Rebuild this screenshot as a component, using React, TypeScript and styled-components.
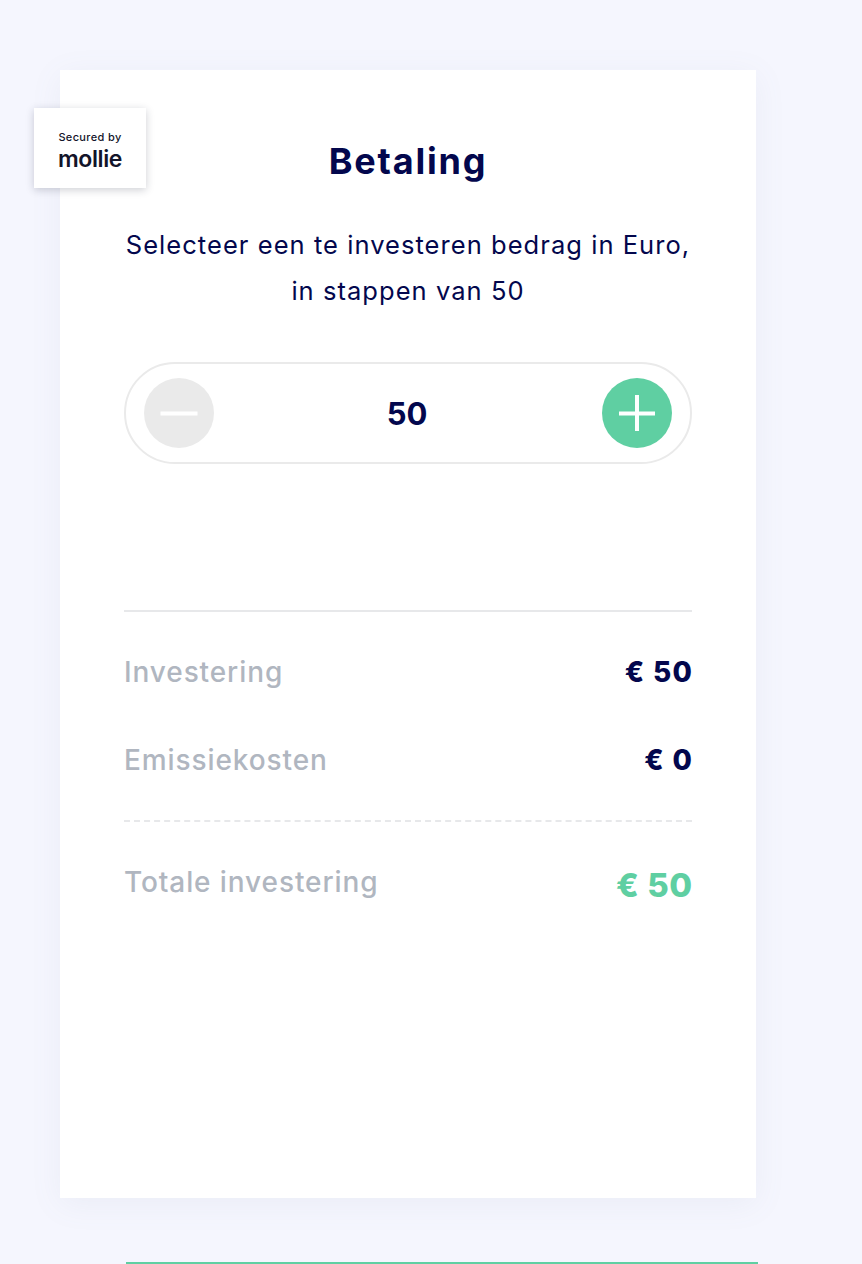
import React from "react";
import styled, { createGlobalStyle } from "styled-components";

const Global = createGlobalStyle`
  html, body { margin: 0; padding: 0; background: #f5f6fe; }
  body { font-family: Inter, "Noto Sans", "Liberation Sans", sans-serif; }
`;

const Page = styled.div`
  width: 862px;
  height: 1264px;
  overflow: hidden;
  background: #f5f6fe;
  padding: 70px 0 0 60px;
  box-sizing: border-box;
`;

const Card = styled.section`
  position: relative;
  width: 696px;
  height: 1128px;
  box-sizing: border-box;
  background: #fff;
  box-shadow: 0 6px 30px rgba(120, 125, 150, 0.08);
  padding: 70px 64px 0;
  display: flex;
  flex-direction: column;
  align-items: stretch;
`;

const Badge = styled.div`
  position: absolute;
  left: -26px;
  top: 38px;
  width: 112px;
  height: 80px;
  background: #fff;
  box-shadow: 0 2px 8px rgba(30, 35, 60, 0.22);
  display: flex;
  flex-direction: column;
  align-items: center;
  justify-content: flex-start;
  padding-top: 22px;
  box-sizing: border-box;
  color: #13152a;
`;

const BadgeLabel = styled.span`
  font-size: 11px;
  line-height: 14px;
  font-weight: 500;
  letter-spacing: 0.35px;
`;

const BadgeLogo = styled.span`
  font-size: 23px;
  line-height: 24px;
  margin-top: 3px;
  font-weight: 600;
  letter-spacing: -0.4px;
`;

const Title = styled.h1`
  margin: 0;
  height: 44px;
  text-align: center;
  font-size: 36px;
  line-height: 42px;
  font-weight: 700;
  color: #03074d;
  letter-spacing: 1.8px;
`;

const Intro = styled.p`
  margin: 38px 0 0;
  text-align: center;
  font-size: 25.5px;
  line-height: 46px;
  font-weight: 400;
  color: #03074d;
  letter-spacing: 1.05px;
`;

const Stepper = styled.div`
  margin-top: 48px;
  height: 102px;
  box-sizing: border-box;
  border: 2px solid #eaeaea;
  border-radius: 51px;
  padding: 0 18px;
  display: flex;
  align-items: center;
  justify-content: space-between;
`;

const StepButton = styled.button<{ $active?: boolean }>`
  width: 70px;
  height: 70px;
  padding: 0;
  border: 0;
  border-radius: 50%;
  background: ${(p) => (p.$active ? "#5fcfa2" : "#eaeaea")};
  display: flex;
  align-items: center;
  justify-content: center;
  svg { display: block; }
`;

const Amount = styled.span`
  font-size: 31px;
  font-weight: 700;
  color: #03074d;
  margin-right: 2px;
`;

const Summary = styled.div`
  margin-top: 146px;
  padding-top: 16px;
  border-top: 2px solid #e7e8ea;
`;

const Row = styled.div`
  height: 88px;
  display: flex;
  align-items: center;
  justify-content: space-between;
`;

const Label = styled.span`
  font-size: 28px;
  font-weight: 500;
  color: #b0b6c0;
  letter-spacing: 0.9px;
`;

const Value = styled.span<{ $total?: boolean }>`
  font-size: ${(p) => (p.$total ? 33 : 28)}px;
  margin-top: ${(p) => (p.$total ? 6 : 0)}px;
  margin-right: ${(p) => (p.$total ? -0.5 : -1.4)}px;
  font-weight: 800;
  color: ${(p) => (p.$total ? "#5fcfa2" : "#03074d")};
  letter-spacing: ${(p) => (p.$total ? 0.5 : 1.4)}px;
`;

const Dashed = styled.div`
  margin: 16px 0;
  border-top: 2px dashed #e7e8ea;
`;

const BottomButton = styled.div`
  margin: 64px 0 0 66px;
  width: 632px;
  height: 60px;
  background: #5fcfa2;
`;

export default function App() {
  return (
    <Page>
      <Global />
      <Card>
        <Badge>
          <BadgeLabel>Secured by</BadgeLabel>
          <BadgeLogo>mollie</BadgeLogo>
        </Badge>
        <Title>Betaling</Title>
        <Intro>
          Selecteer een te investeren bedrag in Euro,
          <br />
          in stappen van 50
        </Intro>
        <Stepper>
          <StepButton aria-label="Minder">
            <svg width="38" height="38" viewBox="0 0 38 38" fill="none" stroke="#fff" strokeWidth="4">
              <path d="M0.5 19.5H37.5" />
            </svg>
          </StepButton>
          <Amount>50</Amount>
          <StepButton $active aria-label="Meer">
            <svg width="36" height="36" viewBox="0 0 36 36" fill="none" stroke="#fff" strokeWidth="4">
              <path d="M0 18.5H36M18 0V36" />
            </svg>
          </StepButton>
        </Stepper>
        <Summary>
          <Row>
            <Label>Investering</Label>
            <Value>€ 50</Value>
          </Row>
          <Row>
            <Label>Emissiekosten</Label>
            <Value>€ 0</Value>
          </Row>
          <Dashed />
          <Row>
            <Label>Totale investering</Label>
            <Value $total>€ 50</Value>
          </Row>
        </Summary>
      </Card>
      <BottomButton />
    </Page>
  );
}
